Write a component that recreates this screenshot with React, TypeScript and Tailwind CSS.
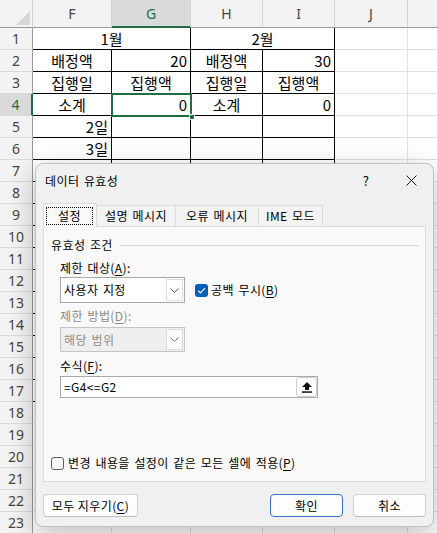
import clsx from "clsx";

type Cell = { t?: string; a?: "c" | "r"; span?: number; sel?: boolean };

const KR = "font-['Noto_Sans_CJK_KR','Noto_Sans',sans-serif]";

const HEADERS = ["F", "G", "H", "I", "J", ""];

const blank = (): Cell[] => [{}, {}, {}, {}, {}, {}];

const DATA: Record<number, Cell[]> = {
  1: [{ t: "1월", a: "c", span: 2 }, { t: "2월", a: "c", span: 2 }, {}, {}],
  2: [
    { t: "배정액", a: "c" },
    { t: "20", a: "r" },
    { t: "배정액", a: "c" },
    { t: "30", a: "r" },
    {},
    {},
  ],
  3: [
    { t: "집행일", a: "c" },
    { t: "집행액", a: "c" },
    { t: "집행일", a: "c" },
    { t: "집행액", a: "c" },
    {},
    {},
  ],
  4: [
    { t: "소계", a: "c" },
    { t: "0", a: "r", sel: true },
    { t: "소계", a: "c" },
    { t: "0", a: "r" },
    {},
    {},
  ],
  5: [{ t: "2일", a: "r" }, {}, {}, {}, {}, {}],
  6: [{ t: "3일", a: "r" }, {}, {}, {}, {}, {}],
};

const rows = Array.from({ length: 23 }, (_, i) => i + 1);

function Chevron({ color = "#5a5a5a" }: { color?: string }) {
  return (
    <svg width="9" height="5" viewBox="0 0 9 5" fill="none">
      <path d="M0.5 0.5 L4.5 4.5 L8.5 0.5" stroke={color} strokeWidth="1" />
    </svg>
  );
}

function Sheet() {
  return (
    <div className="grid grid-cols-[33px_79px_79px_72px_72px_73px_30px] grid-rows-[28px_repeat(23,22px)]">
      {/* corner */}
      <div className="flex items-end justify-end border-r border-b border-r-[#d4d4d4] border-b-[#9a9a9a] bg-[#f3f3f3] p-[2px]">
        <svg width="14" height="14" viewBox="0 0 14 14">
          <polygon points="14,0 14,14 0,14" fill="#d6d6d6" />
        </svg>
      </div>
      {HEADERS.map((h) => (
        <div
          key={h || "k"}
          className={clsx(
            "flex items-center justify-center border-r border-[#d4d4d4] font-['Noto_Sans',sans-serif] text-[14px]",
            h === "G"
              ? "border-b-2 border-b-[#1e6e42] bg-[#dadada] text-[#1e6e42]"
              : "border-b border-b-[#9a9a9a] bg-[#f3f3f3] text-[#444]"
          )}
        >
          {h}
        </div>
      ))}

      {rows.map((r) => {
        const cells = DATA[r] ?? blank();
        let col = 0;
        return [
          <div
            key={`h${r}`}
            className={clsx(
              "flex items-center justify-center border-b border-b-[#dadada] font-['Noto_Sans',sans-serif] text-[14px]",
              r === 4
                ? "border-r-2 border-r-[#1e6e42] bg-[#dadada] text-[#1e6e42]"
                : "border-r border-r-[#9a9a9a] bg-[#f3f3f3] text-[#444]"
            )}
          >
            {r}
          </div>,
          ...cells.map((c, i) => {
            const span = c.span ?? 1;
            const inTable = r <= 17 && col + span - 1 <= 3;
            col += span;
            return (
              <div
                key={`${r}-${i}`}
                className={clsx(
                  "flex items-center whitespace-nowrap border-r border-b px-[3px] text-[15px] leading-[20px] text-black",
                  KR,
                  inTable ? "border-black" : "border-[#e1e1e1]",
                  span === 2 && "col-span-2",
                  c.a === "r" ? "justify-end" : "justify-center",
                  c.sel && "relative"
                )}
              >
                {c.t}
                {c.sel && (
                  <>
                    <span className="pointer-events-none absolute left-[-1px] top-[-1px] right-[-2px] bottom-[-2px] z-10 border-2 border-[#1e6e42]" />
                    <span className="absolute right-[-5px] bottom-[-5px] z-10 h-[6px] w-[6px] border border-white bg-[#1e6e42]" />
                  </>
                )}
              </div>
            );
          }),
        ];
      })}
    </div>
  );
}

function Checkbox({ checked }: { checked?: boolean }) {
  return checked ? (
    <span className="flex h-[13px] w-[13px] items-center justify-center rounded-[3px] bg-[#005fb8]">
      <svg width="9" height="7" viewBox="0 0 9 7" fill="none">
        <path d="M1 3.6 L3.4 6 L8 1.2" stroke="white" strokeWidth="1.1" />
      </svg>
    </span>
  ) : (
    <span className="h-[13px] w-[13px] rounded-[3px] border border-[#5f5f5f] bg-[#f7f7f7]" />
  );
}

function Dialog() {
  return (
    <div
      className={clsx(
        "absolute left-[35px] top-[163px] flex h-[364px] w-[399px] flex-col rounded-[8px] border border-[#c2c2c2] bg-[#f0f0f0] px-[7px] text-[12px] tracking-[0.4px] [word-spacing:1.5px] text-black shadow-[0_8px_28px_rgba(0,0,0,0.26)]",
        KR
      )}
    >
      {/* title bar */}
      <div className="flex h-[39px] items-center pb-[6px]">
        <span className="pl-[2px] text-[12px] leading-[16px]">데이터 유효성</span>
        <span className="ml-auto w-[20px] text-center text-[13px] leading-[16px]">?</span>
        <span className="ml-[25px] mr-[5px] flex w-[20px] justify-center">
          <svg width="11" height="11" viewBox="0 0 11 11" fill="none">
            <path d="M0.5 0.5 L10.5 10.5 M10.5 0.5 L0.5 10.5" stroke="#1a1a1a" strokeWidth="1" />
          </svg>
        </span>
      </div>

      {/* tabs */}
      <div className="relative z-10 mb-[-1px] flex h-[24px] items-end leading-[16px]">
        <div className="flex h-[24px] w-[54px] items-start border-x border-t border-[#d9d9d9] bg-[#f9f9f9] pl-[2px] pt-[3px]">
          <span className="flex h-[18px] w-[47px] items-center justify-center border border-dotted border-black">
            설정
          </span>
        </div>
        <div className="mb-[1px] flex h-[21px] w-[79px] items-center justify-center border-t border-r border-[#dcdcdc] bg-[#f3f3f3]">
          설명 메시지
        </div>
        <div className="mb-[1px] flex h-[21px] w-[83px] items-center justify-center border-t border-r border-[#dcdcdc] bg-[#f3f3f3]">
          오류 메시지
        </div>
        <div className="mb-[1px] flex h-[21px] w-[64px] items-center justify-center border-t border-r border-[#dcdcdc] bg-[#f3f3f3]">
          IME 모드
        </div>
      </div>

      {/* panel */}
      <div className="flex h-[256px] flex-col border border-[#dcdcdc] bg-[#f9f9f9] pl-[7px] pr-[6px] leading-[16px]">
        <div className="mt-[10px] flex h-[16px] items-center gap-[6px]">
          <span>유효성 조건</span>
          <div className="h-px flex-1 bg-[#d9d9d9]" />
        </div>

        <div className="flex flex-col pl-[9px]">
          <div className="mt-[7px] h-[16px]">
            제한 대상(<u className="underline-offset-2">A</u>):
          </div>
          <div className="mt-[1px] flex items-center">
            <div className="flex h-[26px] w-[125px] border border-[#a9a9a9] bg-white">
              <span className="flex flex-1 items-center pl-[3px]">사용자 지정</span>
              <span className="my-px mr-px flex w-[17px] items-center justify-center border border-[#dcdcdc] bg-white">
                <Chevron />
              </span>
            </div>
            <span className="ml-[10px]">
              <Checkbox checked />
            </span>
            <span className="ml-[3px]">
              공백 무시(<u className="underline-offset-2">B</u>)
            </span>
          </div>

          <div className="mt-[5px] h-[16px] text-[#8a8a8a]">
            제한 방법(<u className="underline-offset-2">D</u>):
          </div>
          <div className="mt-[3px] flex h-[25px] w-[125px] border border-[#c4c4c4] bg-[#efefef] text-[#8d8d8d]">
            <span className="flex flex-1 items-center pl-[3px]">해당 범위</span>
            <span className="my-px mr-px flex w-[17px] items-center justify-center border border-[#dcdcdc] bg-[#fbfbfb]">
              <Chevron color="#777" />
            </span>
          </div>

          <div className="mt-[6px] h-[16px]">
            수식(<u className="underline-offset-2">F</u>):
          </div>
          <div className="mt-[2px] flex h-[22px] w-[258px] border border-[#a9a9a9] bg-white">
            <span className="flex flex-1 items-center pl-[3px]">=G4&lt;=G2</span>
            <span className="flex w-[21px] items-center justify-center rounded-[3px] border border-[#cfcfcf] bg-[#fdfdfd]">
              <svg width="10" height="11" viewBox="0 0 10 11">
                <path d="M5 0 L10 5 H7 V8 H3 V5 H0 Z" fill="#111" />
                <rect x="0" y="9.3" width="10" height="1.5" fill="#111" />
              </svg>
            </span>
          </div>
        </div>

        <div className="mb-[11px] mt-auto flex h-[14px] items-center">
          <Checkbox />
          <span className="ml-[4px]">
            변경 내용을 설정이 같은 모든 셀에 적용(<u className="underline-offset-2">P</u>)
          </span>
        </div>
      </div>

      {/* buttons */}
      <div className="mt-[12px] flex h-[23px] leading-[16px]">
        <button className="flex w-[95px] items-center justify-center rounded-[4px] border border-[#d0d0d0] border-b-[#bdbdbd] bg-[#fdfdfd]">
          모두 지우기(<u className="underline-offset-2">C</u>)
        </button>
        <button className="ml-auto flex w-[73px] items-center justify-center rounded-[4px] border border-[#2f72c4] bg-[#fdfdfd]">
          확인
        </button>
        <button className="ml-[10px] flex w-[73px] items-center justify-center rounded-[4px] border border-[#d0d0d0] border-b-[#bdbdbd] bg-[#fdfdfd]">
          취소
        </button>
      </div>
    </div>
  );
}

export default function App() {
  return (
    <div className="relative h-[533px] w-[438px] overflow-hidden bg-white">
      <Sheet />
      <Dialog />
    </div>
  );
}
